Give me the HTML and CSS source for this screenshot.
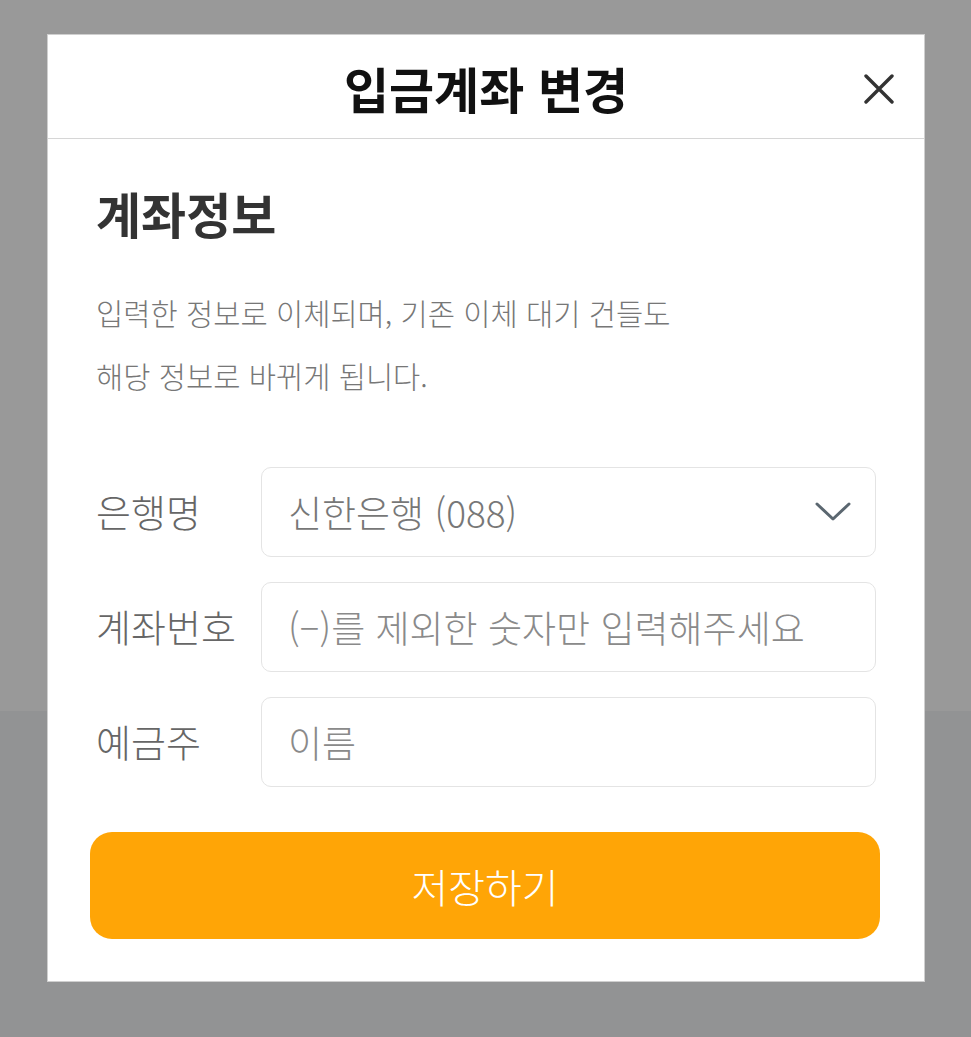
FILE: index.html
```html
<!DOCTYPE html>
<html lang="ko">
<head>
    <meta charset="utf-8">
    <title>입금계좌 변경</title>
    <link rel="stylesheet" href="styles.css">
</head>
<body>

<div class="backdrop">
    <div class="backdrop-top"></div>
    <div class="backdrop-bottom"></div>
</div>

<div class="modal">
    <div class="modal-header">
        <h1>입금계좌 변경</h1>
        <button class="close-button" aria-label="닫기">
            <svg width="30" height="30" viewBox="0 0 30 30">
                <path d="M2 2 L28 28 M28 2 L2 28" stroke="#333" stroke-width="3.4" stroke-linecap="round" fill="none"/>
            </svg>
        </button>
    </div>

    <div class="modal-body">
        <h2>계좌정보</h2>
        <p class="description">입력한 정보로 이체되며, 기존 이체 대기 건들도<br>해당 정보로 바뀌게 됩니다.</p>

        <div class="form-row">
            <label for="bank">은행명</label>
            <div class="select-box" id="bank">
                <span>신한은행 (088)</span>
                <svg width="36" height="20" viewBox="0 0 36 20">
                    <path d="M2 2 L18 17 L34 2" stroke="#5b6770" stroke-width="3" stroke-linecap="round" stroke-linejoin="round" fill="none"/>
                </svg>
            </div>
        </div>

        <div class="form-row">
            <label for="account">계좌번호</label>
            <input type="text" id="account" placeholder="(–)를 제외한 숫자만 입력해주세요">
        </div>

        <div class="form-row">
            <label for="owner">예금주</label>
            <input type="text" id="owner" placeholder="이름">
        </div>

        <button class="save-button">저장하기</button>
    </div>
</div>

</body>
</html>
```

FILE: styles.css
```css
body {
    margin: 0;
    font-family: "Noto Sans CJK KR", "Noto Sans", sans-serif;
    color: #333;
}

.backdrop {
    height: 1037px;
    display: flex;
    flex-direction: column;
}

.backdrop-top {
    height: 711px;
    background-color: #999999;
}

.backdrop-bottom {
    flex: 1;
    background-color: #929394;
}

.modal {
    position: absolute;
    top: 35px;
    left: 48px;
    width: 876px;
    background-color: white;
    box-shadow: 0 0 0 1px #cfcfcf;
}

.modal-header {
    position: relative;
    height: 103px;
    border-bottom: 1px solid #d6d6d6;
    display: flex;
    justify-content: center;
    align-items: center;
}

.modal-header h1 {
    margin: 0;
    font-size: 49px;
    font-weight: bold;
    line-height: 70px;
    color: #111;
    padding-top: 2px;
}

.close-button {
    position: absolute;
    right: 30px;
    top: 39px;
    width: 30px;
    height: 30px;
    padding: 0;
    border: none;
    background: none;
    cursor: pointer;
}

.close-button svg {
    display: block;
}

.modal-body {
    padding: 45px 48px 42px;
}

h2 {
    margin: 0;
    font-size: 49px;
    font-weight: bold;
    line-height: 58px;
    color: #333;
}

.description {
    margin: 39px 0 0;
    font-size: 29.6px;
    font-weight: 300;
    line-height: 63px;
    color: #777;
}

.form-row {
    display: flex;
    align-items: center;
    margin-top: 25px;
}

.form-row:first-of-type {
    margin-top: 60px;
}

label {
    width: 165px;
    flex-shrink: 0;
    padding-bottom: 4px;
    font-size: 38px;
    font-weight: 300;
    color: #666;
}

input, .select-box {
    box-sizing: border-box;
    flex: 1;
    height: 90px;
    padding: 0 26px;
    border: 1px solid #e4e4e4;
    border-radius: 10px;
    font-family: inherit;
    font-size: 37px;
    font-weight: 300;
    color: #777;
    background: white;
}

input::placeholder {
    color: #8a8a8a;
}

.select-box {
    display: flex;
    align-items: center;
    justify-content: space-between;
    padding-right: 24px;
}

.save-button {
    display: block;
    width: calc(100% + 10px);
    margin: 45px -6px 0;
    height: 107px;
    border: none;
    border-radius: 22px;
    background-color: #ffa506;
    color: white;
    font-family: inherit;
    font-size: 40px;
    font-weight: 300;
    cursor: pointer;
}
```
